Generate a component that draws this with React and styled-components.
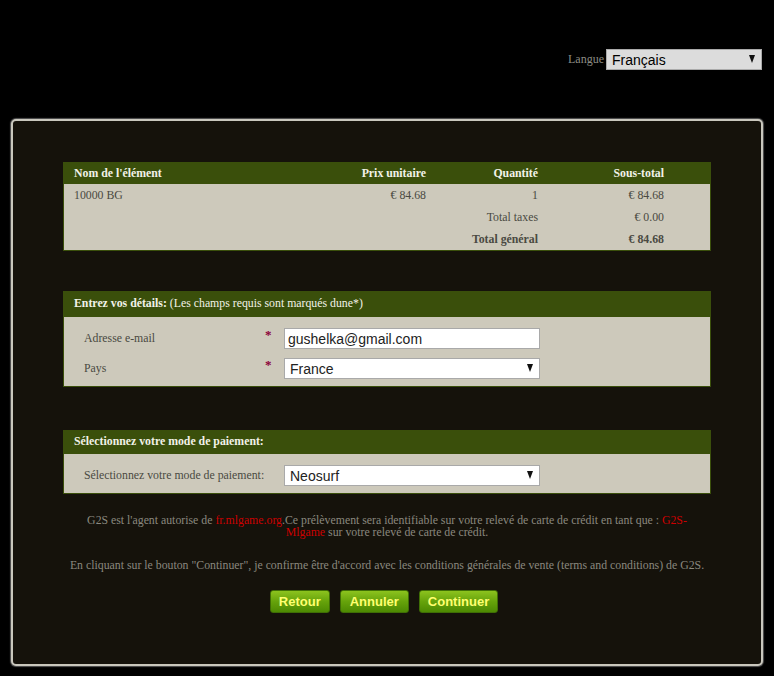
import React from "react";
import styled, { createGlobalStyle } from "styled-components";

const Global = createGlobalStyle`
  html, body { margin: 0; padding: 0; background: #000; }
  body { font-family: "Liberation Serif", "Times New Roman", serif; font-size: 11.8px; }
  * { box-sizing: border-box; }
`;

const Page = styled.div`
  width: 752px;
  margin: 0 auto;
  padding-top: 49px;
  padding-bottom: 10px;
`;

const LangBar = styled.div`
  display: flex;
  justify-content: flex-end;
  align-items: center;
  gap: 2px;
  padding-right: 1px;
`;

const LangLabel = styled.span`
  color: #8c8c84;
  font-size: 12px;
`;

const SelectWrap = styled.div`
  position: relative;
  width: ${(p) => p.$w || 256}px;
  height: 21px;
`;

const Select = styled.select`
  appearance: none;
  -webkit-appearance: none;
  width: 100%;
  height: 100%;
  margin: 0;
  padding: 0 20px 0 5px;
  border: 1px solid ${(p) => (p.$lang ? "#aaa" : "#a9a9a9")};
  border-radius: 0;
  background: ${(p) => (p.$lang ? "#dcdcdc" : "#fff")};
  font-family: "Liberation Sans", Arial, sans-serif;
  font-size: 14px;
  color: ${(p) => (p.$lang ? "#000" : "#222")};
  outline: none;
`;

const Arrow = styled.span`
  position: absolute;
  right: 7px;
  top: 6px;
  width: 0;
  height: 0;
  border-left: 3.5px solid transparent;
  border-right: 3.5px solid transparent;
  border-top: 8px solid #111;
  pointer-events: none;
`;

const Panel = styled.div`
  margin-top: 49px;
  border: 2px solid #c9c7bd;
  border-radius: 5px;
  background: #15120b;
  box-shadow: 0 0 1px 1px #555;
  padding: 41px 50px 51px;
`;

const Table = styled.div`
  border: 1px solid #3a4f0b;
  border-top: 0;
  background: #cdc9bb;
`;

const Grid = styled.div`
  display: grid;
  grid-template-columns: 226px 126px 112px 126px;
  padding: 0 47px 0 10px;
  height: 22px;
  align-items: center;
  background: ${(p) => (p.$head ? "#3a4f0b" : "transparent")};
  color: ${(p) => (p.$head ? "#f2f2e8" : "#4a4a42")};
  font-weight: ${(p) => (p.$head || p.$bold ? "bold" : "normal")};
`;

const Cell = styled.div`
  text-align: ${(p) => (p.$left ? "left" : "right")};
  white-space: nowrap;
`;

const Section = styled.div`
  margin-top: ${(p) => p.$mt}px;
  border: 1px solid #3a4f0b;
  border-top: 0;
  background: #cdc9bb;
`;

const SectionHead = styled.div`
  background: #3a4f0b;
  color: #f2f2e8;
  height: ${(p) => p.$h}px;
  display: flex;
  align-items: center;
  padding-left: 10px;
  padding-bottom: 1px;
  b { margin-right: 3px; }
`;

const SectionBody = styled.div`
  display: flex;
  flex-direction: column;
  gap: 9px;
  padding: 11px 0 7px 20px;
`;

const FormRow = styled.div`
  display: grid;
  grid-template-columns: 181px 19px 256px;
  align-items: center;
  color: #4a4a42;
  height: 21px;
  span { white-space: nowrap; }
`;

const Star = styled.span`
  color: #8b0038;
  font-weight: bold;
  font-size: 13px;
  align-self: start;
  margin-top: -1px;
`;

const Input = styled.input`
  width: 256px;
  height: 21px;
  margin: 0;
  border: 1px solid #a9a9a9;
  padding: 0 3px;
  font-family: "Liberation Sans", Arial, sans-serif;
  font-size: 14px;
  color: #222;
  background: #fff;
  outline: none;
`;

const Notice = styled.p`
  margin: ${(p) => p.$mt}px 0 0;
  text-align: center;
  color: #8a887f;
  line-height: 12px;
  padding: 0 ${(p) => p.$px || 0}px;
`;

const Red = styled.span`
  color: #c00;
`;

const Buttons = styled.div`
  display: flex;
  justify-content: center;
  gap: 10px;
  margin-top: 19px;
  padding-right: 6px;
`;

const Button = styled.button`
  height: 23px;
  padding: 0 ${(p) => p.$px || 9}px;
  border: 1px solid #3f6e05;
  border-radius: 3px;
  background: linear-gradient(#8cc31e, #66a30b 50%, #4d8a02);
  color: #ffff70;
  font-family: "Liberation Sans", Arial, sans-serif;
  font-weight: bold;
  font-size: 13px;
  cursor: pointer;
`;

export default function App() {
  return (
    <Page>
      <Global />
      <LangBar>
        <LangLabel>Langue</LangLabel>
        <SelectWrap $w={156}>
          <Select $lang defaultValue="fr">
            <option value="fr">Français</option>
            <option value="en">English</option>
          </Select>
          <Arrow />
        </SelectWrap>
      </LangBar>

      <Panel>
        <Table>
          <Grid $head>
            <Cell $left>Nom de l'élément</Cell>
            <Cell>Prix unitaire</Cell>
            <Cell>Quantité</Cell>
            <Cell>Sous-total</Cell>
          </Grid>
          <Grid>
            <Cell $left>10000 BG</Cell>
            <Cell>€ 84.68</Cell>
            <Cell>1</Cell>
            <Cell>€ 84.68</Cell>
          </Grid>
          <Grid>
            <Cell $left></Cell>
            <Cell></Cell>
            <Cell>Total taxes</Cell>
            <Cell>€ 0.00</Cell>
          </Grid>
          <Grid $bold>
            <Cell $left></Cell>
            <Cell></Cell>
            <Cell>Total général</Cell>
            <Cell>€ 84.68</Cell>
          </Grid>
        </Table>

        <Section $mt={40}>
          <SectionHead $h={26}>
            <b>Entrez vos détails:</b> (Les champs requis sont marqués dune*)
          </SectionHead>
          <SectionBody>
            <FormRow>
              <span>Adresse e-mail</span>
              <Star>*</Star>
              <Input defaultValue="gushelka@gmail.com" />
            </FormRow>
            <FormRow>
              <span>Pays</span>
              <Star>*</Star>
              <SelectWrap>
                <Select defaultValue="France">
                  <option>France</option>
                </Select>
                <Arrow />
              </SelectWrap>
            </FormRow>
          </SectionBody>
        </Section>

        <Section $mt={43}>
          <SectionHead $h={24}>
            <b>Sélectionnez votre mode de paiement:</b>
          </SectionHead>
          <SectionBody>
            <FormRow>
              <span>Sélectionnez votre mode de paiement:</span>
              <span />
              <SelectWrap>
                <Select defaultValue="Neosurf">
                  <option>Neosurf</option>
                </Select>
                <Arrow />
              </SelectWrap>
            </FormRow>
          </SectionBody>
        </Section>

        <Notice $mt={20} $px={20}>
          G2S est l'agent autorise de <Red>fr.mlgame.org</Red>.Ce prélèvement sera identifiable sur votre relevé de carte de crédit en tant que : <Red>G2S-Mlgame</Red> sur votre relevé de carte de crédit.
        </Notice>
        <Notice $mt={21}>
          En cliquant sur le bouton "Continuer", je confirme être d'accord avec les conditions générales de vente (terms and conditions) de G2S.
        </Notice>

        <Buttons>
          <Button $px={8}>Retour</Button>
          <Button>Annuler</Button>
          <Button $px={8}>Continuer</Button>
        </Buttons>
      </Panel>
    </Page>
  );
}
